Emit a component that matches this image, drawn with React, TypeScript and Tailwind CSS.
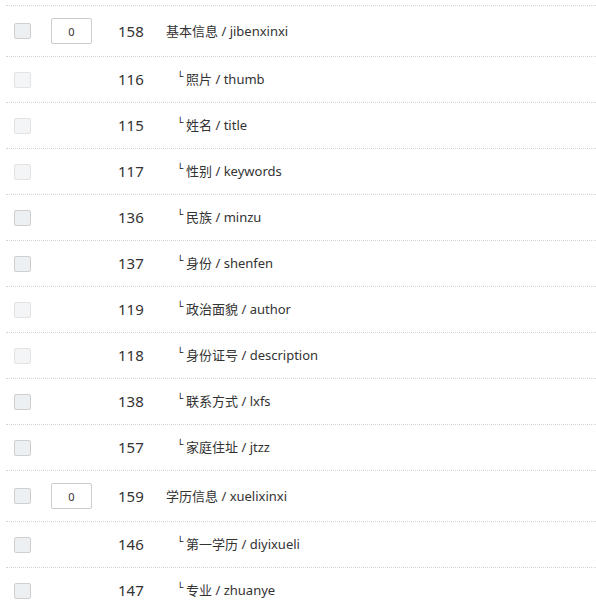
import React from "react";

type Row = {
  id: number;
  title: string;
  name: string;
  parent?: boolean;
  muted?: boolean;
};

const ROWS: Row[] = [
  { id: 158, title: "基本信息", name: "jibenxinxi", parent: true },
  { id: 116, title: "照片", name: "thumb", muted: true },
  { id: 115, title: "姓名", name: "title", muted: true },
  { id: 117, title: "性别", name: "keywords", muted: true },
  { id: 136, title: "民族", name: "minzu" },
  { id: 137, title: "身份", name: "shenfen" },
  { id: 119, title: "政治面貌", name: "author", muted: true },
  { id: 118, title: "身份证号", name: "description", muted: true },
  { id: 138, title: "联系方式", name: "lxfs" },
  { id: 157, title: "家庭住址", name: "jtzz" },
  { id: 159, title: "学历信息", name: "xuelixinxi", parent: true },
  { id: 146, title: "第一学历", name: "diyixueli" },
  { id: 147, title: "专业", name: "zhuanye" },
];

function Checkbox({ muted }: { muted?: boolean }) {
  return (
    <span
      className={`block w-[17px] h-[16px] rounded-[2px] border ${
        muted ? "border-[#e3e3e3] bg-[#f4f5f6]" : "border-[#cfcfcf] bg-[#edf0f2]"
      }`}
    />
  );
}

export default function App() {
  return (
    <div
      className="min-h-screen bg-white pt-[5px] pl-[6px] text-[#333]"
      style={{ fontFamily: '"Noto Sans", "Noto Sans CJK SC", sans-serif' }}
    >
      {ROWS.map((r) => (
        <div
          key={r.id}
          className={`flex items-center border-t border-dotted border-[#d4d4d4] ${
            r.parent ? "h-[51px]" : "h-[46px]"
          }`}
        >
          <div className="w-[45px] pl-[8px]">
            <Checkbox muted={r.muted} />
          </div>
          <div className="w-[67px]">
            {r.parent && (
              <input
                readOnly
                value="0"
                className="block w-[41px] h-[26px] rounded-[2px] border border-[#ccc] bg-white text-center text-[11px] text-[#333] outline-none"
              />
            )}
          </div>
          <div className="w-[48px] text-[15px] leading-none">{r.id}</div>
          <div className="flex items-center text-[13px] leading-none whitespace-nowrap">
            {!r.parent && (
              <span className="ml-[11px] mr-[3px] self-start mt-[-1px] text-[10px] leading-none font-['DejaVu_Sans'] text-[#111]">
                └
              </span>
            )}
            <span>
              {r.title} / {r.name}
            </span>
          </div>
        </div>
      ))}
    </div>
  );
}
